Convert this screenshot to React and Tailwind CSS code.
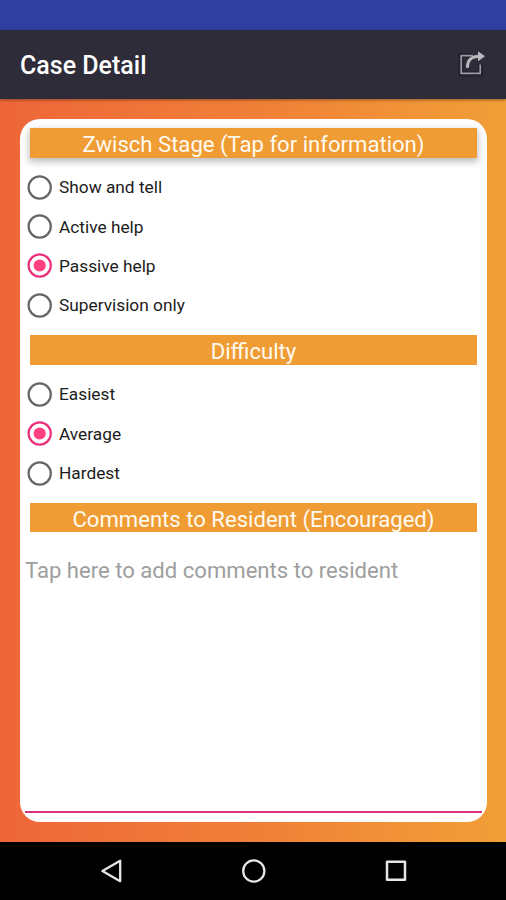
import React, { useState } from 'react';

const STAGES = ['Show and tell', 'Active help', 'Passive help', 'Supervision only'];
const LEVELS = ['Easiest', 'Average', 'Hardest'];

const StatusBar = () => <div className="h-[30px] shrink-0 bg-[#303f9f]" />;

const ShareIcon = () => (
  <svg width="32" height="32" viewBox="0 0 32 32" fill="none">
    <path d="M19 8.6H8V27H27.4V17.5" stroke="#14141f" strokeWidth="5" opacity="0.45" />
    <path d="M20 8.6H8.2V26.4H27.2V17.5" stroke="#9b9ba3" strokeWidth="1.7" />
    <path d="M14.4 20.8C14.6 13.2 17.5 10.2 25 9.2" stroke="#b9b9c0" strokeWidth="3" />
    <path d="M25 4.2L32 9.2L25 14.2Z" fill="#b9b9c0" />
  </svg>
);

const AppBar = () => (
  <header className="relative z-10 flex h-[69px] shrink-0 items-center justify-between bg-[#2d2c38] pr-[21px] pl-5 shadow-[0_1px_3px_rgba(0,0,0,0.4)]">
    <h1 className="pt-[2px] text-[25px] leading-8 font-medium text-white">Case Detail</h1>
    <button type="button" aria-label="Share" className="pb-[3px]">
      <ShareIcon />
    </button>
  </header>
);

const Banner = ({ children, raised }) => (
  <h2
    className={
      'mx-[10px] h-[29.5px] bg-[#ef9c35] text-center text-[22.1px] leading-[32px] font-normal whitespace-nowrap text-[#fffaf0] ' +
      (raised ? 'shadow-[0_3px_7px_1px_rgba(0,0,0,0.26)]' : '')
    }
  >
    {children}
  </h2>
);

const Radio = ({ checked }) => (
  <svg width="25" height="25" viewBox="0 0 25 25" fill="none">
    <circle cx="12.7" cy="12.5" r="11.1" stroke={checked ? '#ec2f7b' : '#666666'} strokeWidth="2.2" />
    {checked && <circle cx="12.7" cy="12.5" r="6.1" fill="#ff4081" />}
  </svg>
);

const RadioList = ({ options, value, onChange }) => (
  <div className="py-[10px] pl-[7px]">
    {options.map((option) => (
      <button
        key={option}
        type="button"
        className="flex h-[39.4px] items-center gap-[7px] text-[17.3px] text-[#1c1c1c]"
        onClick={() => onChange(option)}
      >
        <Radio checked={option === value} />
        <span className="pt-[2px]">{option}</span>
      </button>
    ))}
  </div>
);

const NavBar = () => (
  <nav className="flex h-[58px] shrink-0 items-center justify-center gap-[118px] bg-black pl-[2px]">
    <svg width="24" height="24" viewBox="0 0 24 24" fill="none" stroke="#e6e6e6" strokeWidth="2.3" strokeLinejoin="round">
      <path d="M2.4 12L20.2 1.8V22.2Z" />
    </svg>
    <svg width="24" height="24" viewBox="0 0 24 24" fill="none" stroke="#e6e6e6" strokeWidth="2.3">
      <circle cx="11.8" cy="12" r="10.6" />
    </svg>
    <svg width="24" height="24" viewBox="0 0 24 24" fill="none" stroke="#e6e6e6" strokeWidth="2.5" strokeLinejoin="round">
      <rect x="3" y="2.8" width="18" height="18" />
    </svg>
  </nav>
);

const App = () => {
  const [stage, setStage] = useState('Passive help');
  const [level, setLevel] = useState('Average');

  return (
    <div className="flex h-[900px] w-[506px] flex-col overflow-hidden font-['Roboto',sans-serif]">
      <StatusBar />
      <AppBar />
      <main className="flex min-h-0 flex-1 bg-linear-to-r from-[#ee6639] via-[#f07f37] to-[#f19f37] pt-[19.5px] pr-[19px] pb-5 pl-5">
        <section className="flex w-full flex-col overflow-hidden rounded-[20px] bg-white pt-[9.5px] pb-[9px]">
          <Banner raised>Zwisch Stage (Tap for information)</Banner>
          <RadioList options={STAGES} value={stage} onChange={setStage} />
          <Banner>Difficulty</Banner>
          <RadioList options={LEVELS} value={level} onChange={setLevel} />
          <Banner>Comments to Resident (Encouraged)</Banner>
          <textarea
            className="mx-[5px] mt-[22px] flex-1 resize-none border-b-2 border-[#d8347a] text-[22.1px] leading-8 outline-none placeholder:text-[#9e9e9e]"
            placeholder="Tap here to add comments to resident"
          />
        </section>
      </main>
      <NavBar />
    </div>
  );
};

export default App;
